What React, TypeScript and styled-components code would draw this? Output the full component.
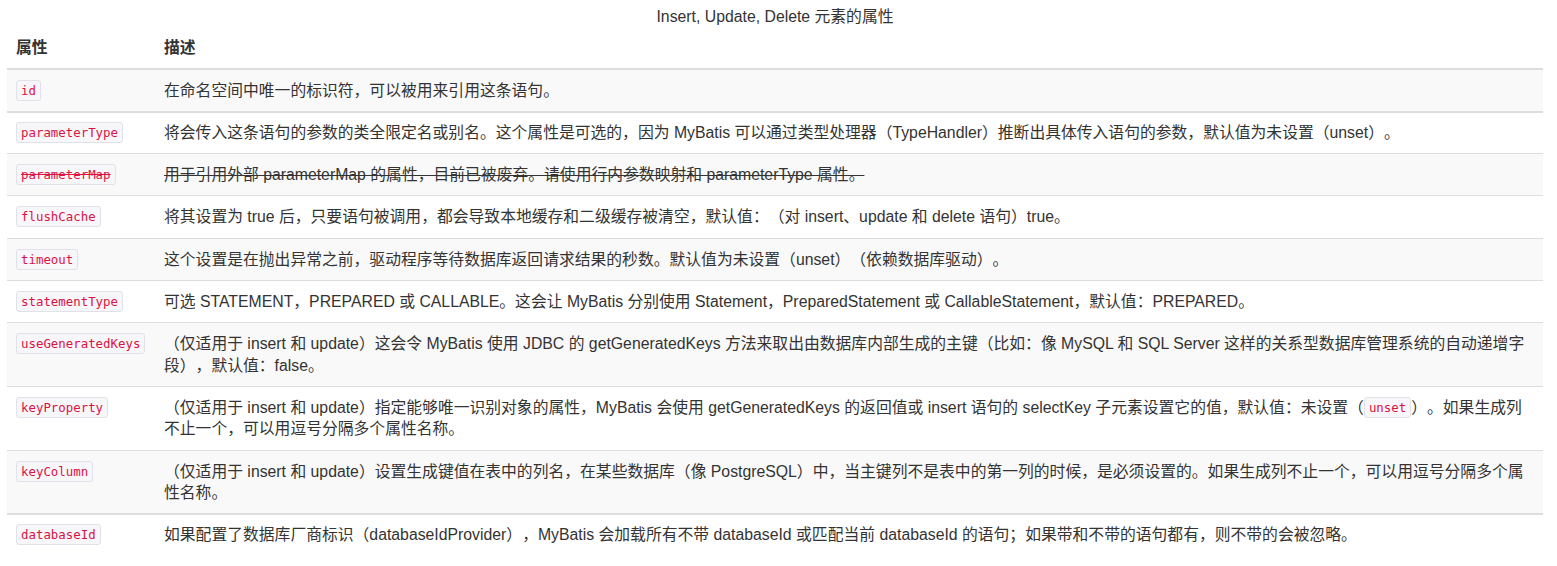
import React from 'react'
import styled, { createGlobalStyle } from 'styled-components'

const GlobalStyle = createGlobalStyle`
  body {
    margin: 0;
    background: #fff;
    color: #333;
    font-family: "Liberation Sans", "Noto Sans CJK SC", sans-serif;
    text-spacing-trim: space-all;
  }
`

const Page = styled.div`
  padding: 0 14px 0 7px;
`

const Table = styled.table`
  width: 1536px;
  border-collapse: collapse;
  border-spacing: 0;
  font-size: 15.8px;
  line-height: 21.3px;
`

const Caption = styled.caption`
  padding: 6px 0 0;
  text-align: center;
  color: #333;
`

const Th = styled.th<{ $narrow?: boolean }>`
  width: ${(p) => (p.$narrow ? '130px' : 'auto')};
  text-align: left;
  font-weight: bold;
  padding: 10px 9px 9px;
  border-bottom: 2px solid #ddd;
  vertical-align: bottom;
`

const Row = styled.tr<{ $striped: boolean; $thick: boolean; $first: boolean }>`
  background: ${(p) => (p.$striped ? '#f9f9f9' : '#fff')};
  & > td {
    border-top: ${(p) => (p.$first ? '0' : p.$thick ? '2px solid #ddd' : '1px solid #ddd')};
    padding-top: ${(p) => (p.$thick ? '9px' : '10px')};
  }
`

const Td = styled.td`
  padding: 10px 9px;
  vertical-align: top;
  & del {
    text-decoration: line-through;
  }
`

const Code = styled.code`
  display: inline-block;
  vertical-align: top;
  font-family: "DejaVu Sans Mono", "Liberation Mono", monospace;
  font-size: 12.4px;
  line-height: 15px;
  padding: 2px 4px;
  color: #dd1144;
  background: #f7f7f9;
  border: 1px solid #e1e1e8;
  border-radius: 3px;
  del & {
    text-decoration: line-through;
  }
`

type Attr = {
  name: string
  desc: React.ReactNode
  striped?: boolean
  thick?: boolean
  deprecated?: boolean
}

const attrs: Attr[] = [
  { name: 'id', desc: '在命名空间中唯一的标识符，可以被用来引用这条语句。', striped: true },
  {
    name: 'parameterType',
    thick: true,
    desc: '将会传入这条语句的参数的类全限定名或别名。这个属性是可选的，因为 MyBatis 可以通过类型处理器（TypeHandler）推断出具体传入语句的参数，默认值为未设置（unset）。',
  },
  {
    name: 'parameterMap',
    striped: true,
    deprecated: true,
    desc: '用于引用外部 parameterMap 的属性，目前已被废弃。请使用行内参数映射和 parameterType 属性。',
  },
  {
    name: 'flushCache',
    desc: '将其设置为 true 后，只要语句被调用，都会导致本地缓存和二级缓存被清空，默认值：（对 insert、update 和 delete 语句）true。',
  },
  {
    name: 'timeout',
    striped: true,
    desc: '这个设置是在抛出异常之前，驱动程序等待数据库返回请求结果的秒数。默认值为未设置（unset）（依赖数据库驱动）。',
  },
  {
    name: 'statementType',
    desc: '可选 STATEMENT，PREPARED 或 CALLABLE。这会让 MyBatis 分别使用 Statement，PreparedStatement 或 CallableStatement，默认值：PREPARED。',
  },
  {
    name: 'useGeneratedKeys',
    striped: true,
    desc: '（仅适用于 insert 和 update）这会令 MyBatis 使用 JDBC 的 getGeneratedKeys 方法来取出由数据库内部生成的主键（比如：像 MySQL 和 SQL Server 这样的关系型数据库管理系统的自动递增字段），默认值：false。',
  },
  {
    name: 'keyProperty',
    desc: (
      <>
        （仅适用于 insert 和 update）指定能够唯一识别对象的属性，MyBatis 会使用 getGeneratedKeys 的返回值或 insert 语句的
        selectKey 子元素设置它的值，默认值：未设置（<Code>unset</Code>）。如果生成列不止一个，可以用逗号分隔多个属性名称。
      </>
    ),
  },
  {
    name: 'keyColumn',
    striped: true,
    desc: '（仅适用于 insert 和 update）设置生成键值在表中的列名，在某些数据库（像 PostgreSQL）中，当主键列不是表中的第一列的时候，是必须设置的。如果生成列不止一个，可以用逗号分隔多个属性名称。',
  },
  {
    name: 'databaseId',
    thick: true,
    desc: '如果配置了数据库厂商标识（databaseIdProvider），MyBatis 会加载所有不带 databaseId 或匹配当前 databaseId 的语句；如果带和不带的语句都有，则不带的会被忽略。',
  },
]

const App = () => {
  return (
    <Page>
      <GlobalStyle />
      <Table>
        <Caption>Insert, Update, Delete 元素的属性</Caption>
        <thead>
          <tr>
            <Th $narrow>属性</Th>
            <Th>描述</Th>
          </tr>
        </thead>
        <tbody>
          {attrs.map((a, i) => (
            <Row key={a.name} $striped={!!a.striped} $thick={!!a.thick} $first={i === 0}>
              <Td>
                {a.deprecated ? (
                  <del>
                    <Code>{a.name}</Code>
                  </del>
                ) : (
                  <Code>{a.name}</Code>
                )}
              </Td>
              <Td>{a.deprecated ? <del>{a.desc}</del> : a.desc}</Td>
            </Row>
          ))}
        </tbody>
      </Table>
    </Page>
  )
}

export default App
